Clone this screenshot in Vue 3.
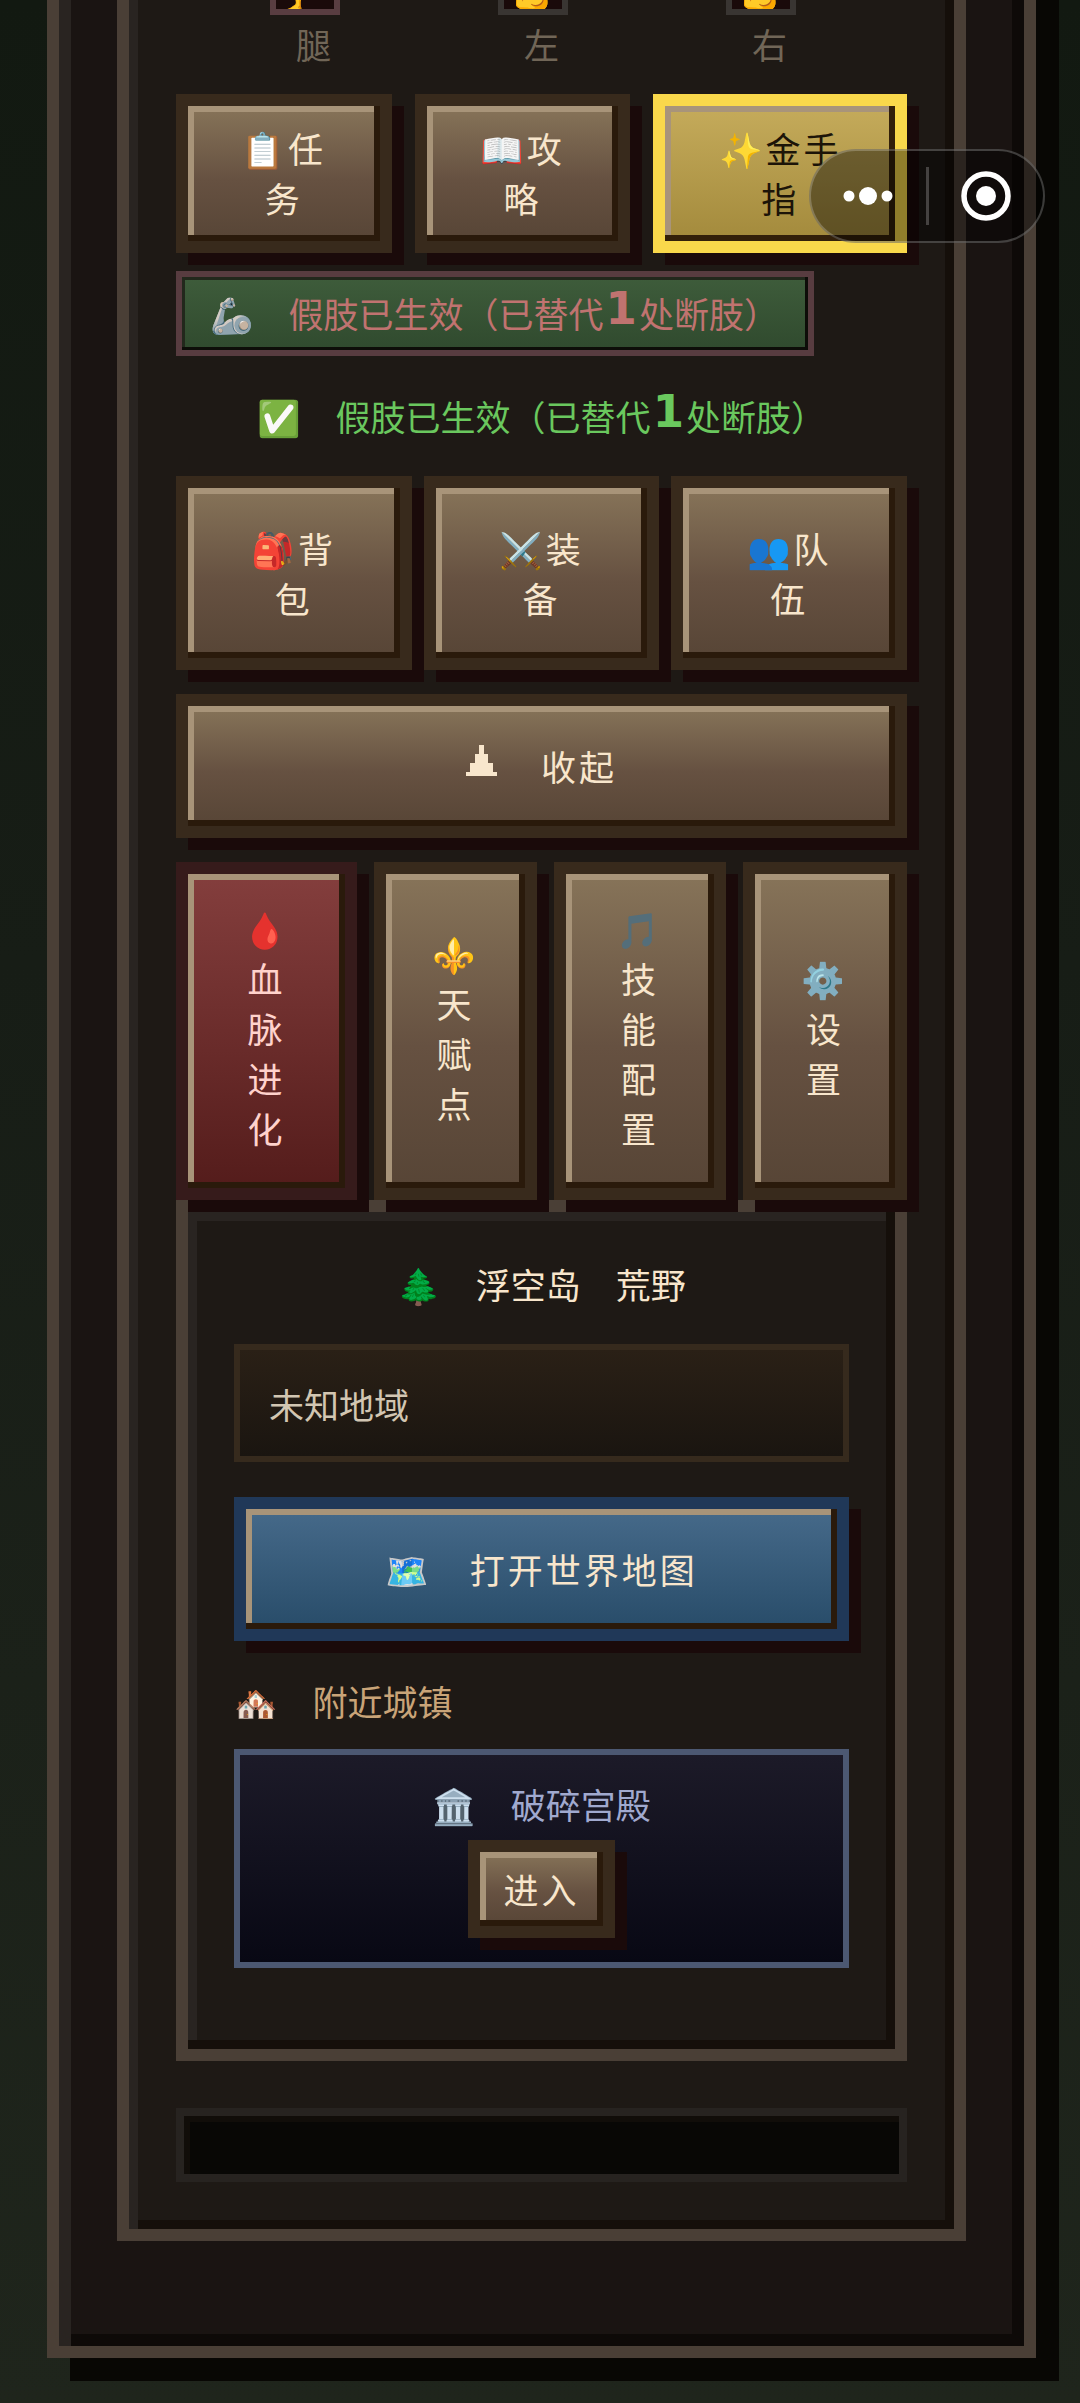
<script setup>
const limbs = [
  { icon: '🦵', label: '腿', hurt: true },
  { icon: '💪', label: '左', hurt: false },
  { icon: '💪', label: '右', hurt: false },
]
const bags = [
  { icon: '🎒', first: '背', second: '包' },
  { icon: '⚔️', first: '装', second: '备' },
  { icon: '👥', first: '队', second: '伍' },
]
const tools = [
  { icon: '🩸', text: '血脉进化', kind: 'red' },
  { icon: '⚜️', text: '天赋点', kind: '' },
  { icon: '🎵', text: '技能配置', kind: '' },
  { icon: '⚙️', text: '设置', kind: '' },
]
</script>

<template>
  <div class="page">
    <nav class="capsule" aria-label="小程序">
      <button type="button" class="cap-btn" aria-label="更多">
        <svg width="52" height="20" viewBox="0 0 52 20" fill="#fff">
          <circle cx="7" cy="10" r="5.5" /><circle cx="26" cy="10" r="9" /><circle cx="45" cy="10" r="5.5" />
        </svg>
      </button>
      <span class="cap-line"></span>
      <button type="button" class="cap-btn" aria-label="关闭">
        <svg width="50" height="50" viewBox="0 0 50 50">
          <circle cx="25" cy="25" r="22" fill="none" stroke="#fff" stroke-width="5.5" />
          <circle cx="25" cy="25" r="10" fill="#fff" />
        </svg>
      </button>
    </nav>

    <main class="frame">
      <section class="inner">
        <div class="limbs">
          <div v-for="l in limbs" :key="l.label" class="limb">
            <div class="limb-box" :class="{ hurt: l.hurt }"><span>{{ l.icon }}</span></div>
            <div class="limb-label">{{ l.label }}</div>
          </div>
        </div>

        <div class="row top-row">
          <button type="button" class="btn">📋任<br />务</button>
          <button type="button" class="btn">📖攻<br />略</button>
          <button type="button" class="btn gold">✨金手<br />指</button>
        </div>

        <div class="limb-status">🦾　假肢已生效（已替代<b class="num">1</b>处断肢）</div>
        <p class="limb-ok">✅　假肢已生效（已替代<b class="num">1</b>处断肢）</p>

        <div class="row bag-row">
          <button v-for="b in bags" :key="b.first" type="button" class="btn">{{ b.icon }}{{ b.first }}<br />{{ b.second }}</button>
        </div>

        <button type="button" class="btn fold">
          <svg class="tri" width="31" height="31" viewBox="0 0 7 7" shape-rendering="crispEdges">
            <path d="M3 0H4V2H5V4H6V6H7V7H0V6H1V4H2V2H3Z" fill="#f8e6cc" />
          </svg>收起
        </button>

        <div class="tools">
          <button v-for="t in tools" :key="t.text" type="button" class="btn tool" :class="t.kind">
            <span>{{ t.icon }}</span>
            <span v-for="c in t.text" :key="c">{{ c }}</span>
          </button>
        </div>

        <section class="place">
          <h1 class="place-title">🌲　浮空岛　荒野</h1>
          <p class="region">未知地域</p>
          <button type="button" class="btn blue">🗺️　打开世界地图</button>
          <h2 class="near">🏘️　附近城镇</h2>
          <div class="town">
            <h3 class="town-name">🏛️　破碎宫殿</h3>
            <button type="button" class="btn enter">进入</button>
          </div>
        </section>

        <div class="bar"></div>
      </section>
    </main>
  </div>
</template>

<style>
html,
body {
  margin: 0;
  background: #1f251c;
}
</style>

<style scoped>
.page {
  position: relative;
  box-sizing: border-box;
  padding: 0 44px 45px 47px;
  overflow: hidden;
  background: linear-gradient(#121911, #171d16 40%, #1f251c);
  font-family: "Noto Sans CJK SC", "Noto Color Emoji", sans-serif;
  font-size: 35px;
  line-height: 50px;
  color: #f8e6cc;
}
.frame {
  padding: 0 58px 105px;
  border: 12px solid #4a3f36;
  border-top: 0;
  background: #1a1412;
  box-shadow: inset 12px 0 #292421, inset -12px -12px #0e0a08, 23px 23px #080704, 23px 0 #080704;
}
.inner {
  padding: 0 47px 47px;
  border: 12px solid #4a3f36;
  border-top: 0;
  background: #1e1915;
  box-shadow: inset 9px 0 #292421, inset -9px -9px #150f0a;
}
.limbs {
  display: grid;
  grid-template-columns: repeat(3, 228px);
  justify-content: center;
  text-align: center;
  color: #716657;
}
.limb-box {
  display: flex;
  align-items: flex-end;
  justify-content: center;
  width: 58px;
  height: 9px;
  margin: 0 auto;
  border: 6px solid #393532;
  border-top: 0;
  background: #1a0a0a;
  overflow: hidden;
}
.limb-box.hurt {
  border-color: #593d41;
}
.limb {
  padding-right: 18px;
}
.limb-box span {
  line-height: 41px;
}
.limb-label {
  padding: 4px 0 25px 18px;
}
.btn {
  position: relative;
  margin: 0;
  padding: 35px 12px;
  border: 12px solid #382a1c;
  border-radius: 0;
  background: linear-gradient(#877459, #665141 55%, #574536) padding-box;
  box-shadow: inset -6px -6px #2a1a0b, inset 6px 6px #a89479, 12px 12px #1a0a0a;
  font: inherit;
  letter-spacing: 3px;
  color: #f8e6cc;
  text-align: center;
  cursor: pointer;
}
.row {
  display: flex;
}
.top-row {
  gap: 23px;
}
.top-row .btn {
  flex: 1 1 84px;
  padding: 17px 12px 18px;
}
.top-row .gold {
  flex-basis: 122px;
  border-color: #f9d84b;
  background: linear-gradient(#c5ab5b, #a38a3c) padding-box;
  box-shadow: inset -6px -6px #33200a, inset 6px 6px #a8947a, 12px 12px #1a0a0a;
  color: #1c1408;
}
.limb-status {
  width: fit-content;
  margin-top: 18px;
  padding: 11px 29px 12px 28px;
  border: 6px solid #583c40;
  background: linear-gradient(#3e5c3b, #304a2e);
  box-shadow: inset -3px -3px #0d0d08, inset 3px 3px #22281c;
  color: #c07370;
}
.num {
  padding: 0 2px;
  font-family: "DejaVu Sans", sans-serif;
  font-size: 45px;
  line-height: 1px;
  vertical-align: 4px;
}
.limb-ok {
  margin: 35px 0;
  text-align: center;
  color: #6ac85e;
}
.bag-row {
  gap: 12px;
}
.bag-row .btn {
  flex: 1;
}
.fold {
  display: block;
  width: 100%;
  margin: 24px 0;
}
.tri {
  margin-right: 44px;
  vertical-align: 5px;
}
.tools {
  display: grid;
  grid-template-columns: 181fr 163fr 172fr 164fr;
  gap: 17px;
}
.tool {
  display: flex;
  flex-direction: column;
  align-items: center;
  justify-content: center;
  padding: 29px 12px 35px;
}
.red {
  border-color: #361b1b;
  background: linear-gradient(#843e3d, #541c1b) padding-box;
  color: #ffd2cc;
}
.place {
  padding: 47px 46px 81px;
  border: 12px solid #4a3f36;
  background: #1e1915;
  box-shadow: inset -9px -9px #150f0a, inset 9px 9px #292421;
}
.place-title,
.near,
.town-name {
  margin: 0;
  font-size: inherit;
  font-weight: 400;
}
.place-title {
  text-align: center;
}
.region {
  margin: 35px 0;
  padding: 29px 29px 27px;
  border: 6px solid #362a1d;
  background: linear-gradient(#2a2016, #1a1510);
  color: #d2c6b2;
}
.blue {
  display: block;
  width: 100%;
  border-color: #203858;
  background: linear-gradient(#466a8a, #284c69) padding-box;
}
.near {
  margin: 35px 0 23px;
  color: #c9a478;
}
.town {
  padding: 24px 0;
  border: 6px solid #4c5872;
  background: linear-gradient(#1c1a28, #080814);
  text-align: center;
}
.town-name {
  margin-bottom: 11px;
  color: #a0a9cf;
}
.enter {
  display: block;
  margin: 0 auto;
  padding: 12px 23px;
}
.bar {
  height: 58px;
  margin-top: 47px;
  border: 8px solid #272320;
  background: #080705;
  box-shadow: inset 6px 6px #110d09;
}
.capsule {
  position: absolute;
  z-index: 2;
  top: 149px;
  right: 35px;
  display: flex;
  align-items: center;
  box-sizing: border-box;
  width: 236px;
  height: 94px;
  border: 2px solid rgba(255, 255, 255, 0.22);
  border-radius: 47px;
  background: rgba(0, 0, 0, 0.42);
}
.cap-btn {
  flex: 1;
  display: flex;
  align-items: center;
  justify-content: center;
  height: 100%;
  padding: 0;
  border: 0;
  background: none;
}
.cap-line {
  width: 3px;
  height: 58px;
  background: rgba(255, 255, 255, 0.22);
}
</style>
